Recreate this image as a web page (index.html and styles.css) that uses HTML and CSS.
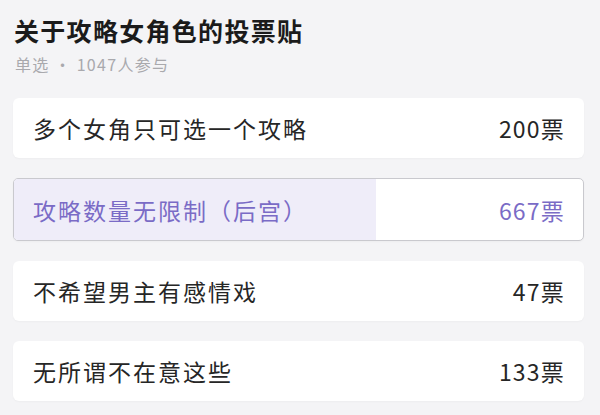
FILE: index.html
```html
<!DOCTYPE html>
<html lang="zh-CN">
<head>
<meta charset="utf-8">
<link rel="stylesheet" href="styles.css">
</head>
<body>
<div class="poll">
  <h1 class="title">关于攻略女角色的投票贴</h1>
  <div class="meta">单选 · 1047人参与</div>
  <div class="options">
    <div class="option"><span class="label">多个女角只可选一个攻略</span><span class="count">200票</span></div>
    <div class="option selected"><div class="fill" style="width:63.7%"></div><span class="label">攻略数量无限制（后宫）</span><span class="count">667票</span></div>
    <div class="option"><span class="label">不希望男主有感情戏</span><span class="count">47票</span></div>
    <div class="option"><span class="label">无所谓不在意这些</span><span class="count">133票</span></div>
  </div>
</div>
</body>
</html>
```

FILE: styles.css
```css
html, body {
  margin: 0;
  padding: 0;
  background: #f4f4f6;
}
body {
  font-family: "Noto Sans CJK SC", "Noto Sans", sans-serif;
  width: 600px;
  height: 415px;
  overflow: hidden;
}
.poll {
  padding: 12px 16px 0 13px;
}
.title {
  margin: 0;
  font-size: 25px;
  line-height: 36px;
  font-weight: 700;
  color: #1b1b1b;
  letter-spacing: 1.3px;
  padding-left: 1px;
}
.meta {
  margin-top: 5px;
  font-size: 16px;
  line-height: 22px;
  color: #a9a9ad;
  letter-spacing: 1.3px;
  padding-left: 2px;
}
.options {
  margin-top: 23px;
  display: flex;
  flex-direction: column;
  gap: 20px;
}
.option {
  position: relative;
  height: 60px;
  background: #ffffff;
  border-radius: 6px;
  display: flex;
  align-items: center;
  justify-content: space-between;
  padding: 0 19px 0 20px;
  box-shadow: 0 1px 2px rgba(0,0,0,0.03);
  overflow: hidden;
}
.option.selected {
  height: 61px;
  border: 1px solid #c9c9ce;
  padding: 0 18px 0 19px;
  border-radius: 5px;
}
.fill {
  position: absolute;
  left: 0;
  top: 0;
  bottom: 0;
  background: #efedf9;
}
.label, .count {
  position: relative;
  font-size: 23px;
  letter-spacing: 2px;
  color: #262626;
}
.count {
  letter-spacing: 1.2px;
}
.selected .label, .selected .count {
  color: #7a6bc6;
}
```
